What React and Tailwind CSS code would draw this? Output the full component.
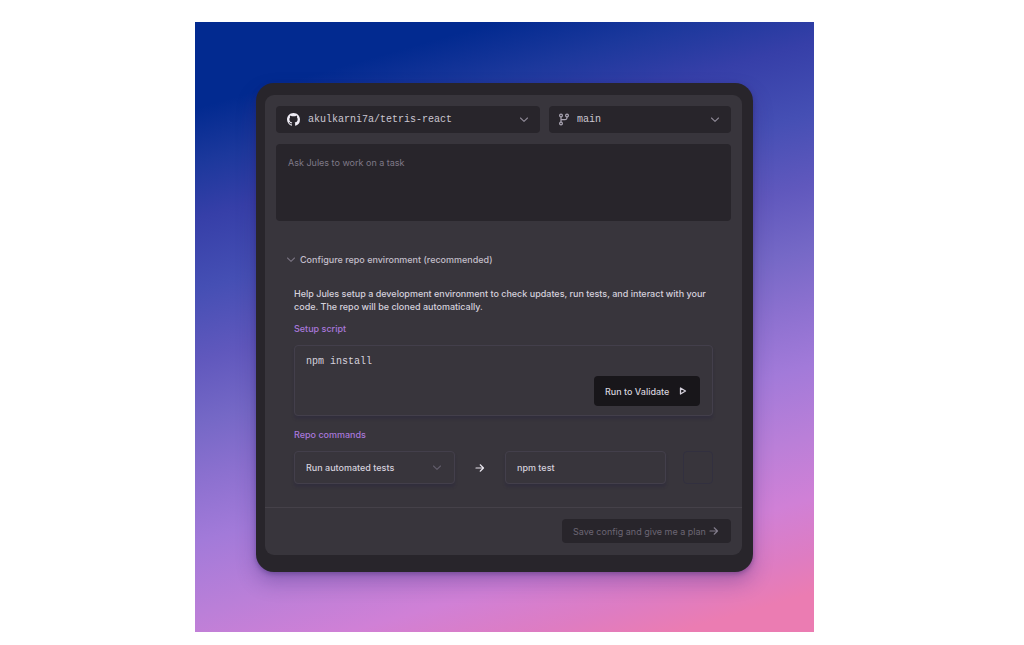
import React, { useState } from 'react';
import clsx from 'clsx';

function GithubIcon() {
  return (
    <svg viewBox="0 0 16 16" className="size-[13px] fill-[#f0edf6]" aria-hidden="true">
      <path d="M8 0C3.58 0 0 3.58 0 8c0 3.54 2.29 6.53 5.47 7.59.4.07.55-.17.55-.38 0-.19-.01-.82-.01-1.49-2.01.37-2.53-.49-2.69-.94-.09-.23-.48-.94-.82-1.13-.28-.15-.68-.52-.01-.53.63-.01 1.08.58 1.23.82.72 1.21 1.87.87 2.33.66.07-.52.28-.87.51-1.07-1.78-.2-3.64-.89-3.64-3.95 0-.87.31-1.59.82-2.15-.08-.2-.36-1.02.08-2.12 0 0 .67-.21 2.2.82.64-.18 1.32-.27 2-.27s1.36.09 2 .27c1.53-1.04 2.2-.82 2.2-.82.44 1.1.16 1.92.08 2.12.51.56.82 1.27.82 2.15 0 3.07-1.87 3.75-3.65 3.95.29.25.54.73.54 1.48 0 1.07-.01 1.93-.01 2.2 0 .21.15.46.55.38A8.01 8.01 0 0 0 16 8c0-4.42-3.58-8-8-8z" />
    </svg>
  );
}

function BranchIcon() {
  return (
    <svg viewBox="0 0 12 13" className="h-[13px] w-3 fill-none stroke-[#aaa5b3]" strokeWidth="1.2" aria-hidden="true">
      <circle cx="3" cy="2.5" r="1.4" />
      <circle cx="3" cy="10.5" r="1.4" />
      <circle cx="9" cy="2.5" r="1.4" />
      <path d="M3 4v5M9 4v.8c0 1.2-.7 1.8-1.8 1.8H3" />
    </svg>
  );
}

function Chevron({ className }) {
  return (
    <svg viewBox="0 0 10 10" className={clsx('size-[10px] fill-none', className)} strokeWidth="1.1" strokeLinecap="round" strokeLinejoin="round" aria-hidden="true">
      <path d="M1.5 3 5 6.3 8.5 3" />
    </svg>
  );
}

function Arrow({ className }) {
  return (
    <svg viewBox="0 0 10 10" className={clsx('size-[10px] fill-none', className)} strokeWidth="1.2" strokeLinecap="round" strokeLinejoin="round" aria-hidden="true">
      <path d="M1 5h7.5M5.2 1.8 8.5 5 5.2 8.2" />
    </svg>
  );
}

const fieldBox = 'rounded-[4px] border border-[#433f4b] shadow-[0_3px_3px_rgba(38,34,64,0.3)]';

export default function App() {
  const [task, setTask] = useState('');
  const [script, setScript] = useState('npm install');
  const [command, setCommand] = useState('npm test');
  const [open, setOpen] = useState(true);

  return (
    <div className="flex justify-center bg-white pt-[22px] pr-[15px] pb-[13px] font-['Inter',sans-serif] text-[9px] leading-[13px] text-[#d5d1dc]">
      <main className="w-full max-w-[619px] bg-[linear-gradient(164deg,#022a90_0%,#022a90_11%,#1c389c_18%,#363fa8_25%,#454fb4_34%,#6058bd_43%,#7568c6_51%,#8b70cf_58%,#a27ad9_66%,#ba7fd8_75%,#d080d6_83%,#de7cc2_90%,#eb7cb2_95%)] p-[61px] pb-[60px]">
        <div className="rounded-[18px] bg-[#28252b] pt-3 pr-[11px] pb-[17px] pl-[9px] shadow-[0_10px_20px_rgba(50,30,110,0.3),0_2px_5px_rgba(40,30,90,0.35)]">
          <form className="rounded-[9px] bg-[#38353c]" onSubmit={(e) => e.preventDefault()}>
            <div className="px-[11px] pt-[11px]">
              <div className="flex gap-[9px] font-['Liberation_Mono',monospace] text-[10px] text-[#cbc7d2]">
                <div className="grid flex-[264] grid-cols-[auto_1fr] items-center rounded-[4px] bg-[#28252b]">
                  <span className="pointer-events-none col-start-1 row-start-1 pl-[11px]"><GithubIcon /></span>
                  <select aria-label="Repository" className="col-span-2 col-start-1 row-start-1 h-[27px] w-full appearance-none pl-8 outline-none">
                    <option>akulkarni7a/tetris-react</option>
                  </select>
                  <Chevron className="pointer-events-none col-start-2 row-start-1 mr-[11px] justify-self-end stroke-[#8d8895]" />
                </div>
                <div className="grid flex-[182] grid-cols-[auto_1fr] items-center rounded-[4px] bg-[#28252b]">
                  <span className="pointer-events-none col-start-1 row-start-1 pl-[9px]"><BranchIcon /></span>
                  <select aria-label="Branch" className="col-span-2 col-start-1 row-start-1 h-[27px] w-full appearance-none pl-7 outline-none">
                    <option>main</option>
                  </select>
                  <Chevron className="pointer-events-none col-start-2 row-start-1 mr-[11px] justify-self-end stroke-[#8d8895]" />
                </div>
              </div>
              <textarea
                aria-label="Task"
                placeholder="Ask Jules to work on a task"
                value={task}
                onChange={(e) => setTask(e.target.value)}
                className="mt-[11px] block h-[77px] w-full resize-none rounded-[4px] bg-[#28252b] p-3 outline-none placeholder:text-[#7f7987]"
              />
            </div>

            <div className="px-[29px] pt-8 pb-[23px]">
              <button type="button" aria-expanded={open} onClick={() => setOpen(!open)} className="-ml-2 flex items-center gap-1 font-medium text-[#c3bfca]">
                <Chevron className={clsx('stroke-[#77717f]', !open && '-rotate-90')} />
                Configure repo environment (recommended)
              </button>
              {open && (
                <div className="font-medium">
                  <p className="mt-[21px]">
                    Help Jules setup a development environment to check updates, run tests, and interact with your code. The repo will be cloned automatically.
                  </p>
                  <label htmlFor="setup" className="mt-[9px] block text-[#a978db]">Setup script</label>
                  <div className={clsx('mt-[10px] flex h-[71px] flex-col', fieldBox)}>
                    <textarea
                      id="setup"
                      value={script}
                      onChange={(e) => setScript(e.target.value)}
                      className="min-h-0 flex-1 resize-none px-[11px] pt-[9px] font-['Liberation_Mono',monospace] text-[10px] font-normal outline-none"
                    />
                    <button type="button" className="mr-3 mb-[9px] flex h-[30px] w-[106px] items-center justify-between self-end rounded-[4px] bg-[#18161a] pr-[13px] pl-[11px]">
                      Run to Validate
                      <svg viewBox="0 0 8 8" className="size-2 fill-none stroke-[#d5d1dc]" strokeWidth="1.3" strokeLinejoin="round" aria-hidden="true">
                        <path d="M1.5 1v6l5-3z" />
                      </svg>
                    </button>
                  </div>
                  <label htmlFor="command" className="mt-3 block text-[#a978db]">Repo commands</label>
                  <div className="mt-[10px] flex h-[33px]">
                    <div className={clsx('grid flex-1 grid-cols-1 items-center', fieldBox)}>
                      <select aria-label="Command type" className="col-start-1 row-start-1 h-full w-full appearance-none pl-[11px] outline-none">
                        <option>Run automated tests</option>
                      </select>
                      <Chevron className="pointer-events-none col-start-1 row-start-1 mr-3 justify-self-end stroke-[#625d6b]" />
                    </div>
                    <span className="flex w-[50px] items-center justify-center">
                      <Arrow className="stroke-[#e9e6ee]" />
                    </span>
                    <div className={clsx('flex flex-1', fieldBox)}>
                      <input
                        id="command"
                        value={command}
                        onChange={(e) => setCommand(e.target.value)}
                        className="w-full min-w-0 px-[11px] outline-none"
                      />
                    </div>
                    <button type="button" aria-label="Run command" className="ml-[17px] w-[30px] rounded-[4px] border border-[#32303f]" />
                  </div>
                </div>
              )}
            </div>

            <div className="flex justify-end border-t border-[#454149] px-[11px] pt-[11px] pb-3">
              <button type="submit" disabled className="flex h-6 w-[169px] items-center justify-between rounded-[4px] bg-[#28252b] pr-3 pl-[11px] whitespace-nowrap text-[#6c6674]">
                Save config and give me a plan
                <Arrow className="stroke-[#827c8b]" />
              </button>
            </div>
          </form>
        </div>
      </main>
    </div>
  );
}
